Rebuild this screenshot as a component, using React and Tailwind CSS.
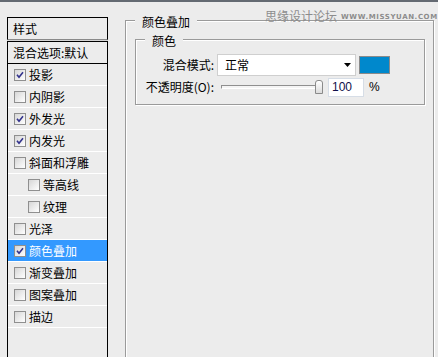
import React from 'react';

const items = [
    { label: '投影', checked: true },
    { label: '内阴影' },
    { label: '外发光', checked: true },
    { label: '内发光', checked: true },
    { label: '斜面和浮雕' },
    { label: '等高线', sub: true },
    { label: '纹理', sub: true },
    { label: '光泽' },
    { label: '颜色叠加', checked: true, active: true },
    { label: '渐变叠加' },
    { label: '图案叠加' },
    { label: '描边' },
];

function Checkbox({ checked }) {
    return (
        <span className="w-[12px] h-[12px] shrink-0 border border-[#8f8f8f] bg-linear-to-br from-[#d6d6d6] to-white flex items-center justify-center">
            {checked && (
                <svg width="8" height="8" viewBox="0 0 8 8">
                    <path d="M1 3.8 L3 6.2 L7 1.2" fill="none" stroke="#32328c" strokeWidth="1.6" />
                </svg>
            )}
        </span>
    );
}

export default function App() {
    return (
        <div className="relative w-[438px] h-[357px] bg-[#ececec] overflow-hidden flex flex-col font-['Noto_Sans_CJK_SC',sans-serif] text-[12px] leading-[14px] text-black">
            <div className="h-[2px] bg-[#646a72] shrink-0" />

            <div className="flex flex-1 min-h-0">
                {/* style list */}
                <aside className="ml-[7px] mt-[15px] w-[101px] flex flex-col shrink-0">
                    <div className="h-[23px] border-x border-t border-black border-b border-b-[#8a8a8a] flex items-center pl-[5px]">
                        样式
                    </div>
                    <div className="h-[1px] bg-[#d4d4d4]" />
                    <div className="flex-1 border-x border-t border-black">
                        <div className="h-[22px] border-b border-black flex items-center pl-[5px]">
                            混合选项:默认
                        </div>
                        {items.map((item) => (
                            <div
                                key={item.label}
                                className={`h-[22px] border-b border-white flex items-center gap-[3px] ${item.sub ? 'pl-[20px]' : 'pl-[6px]'} ${item.active ? 'bg-[#3399ff] text-white' : ''}`}
                            >
                                <Checkbox checked={item.checked} />
                                <span>{item.label}</span>
                            </div>
                        ))}
                    </div>
                </aside>

                {/* color overlay panel */}
                <fieldset className="ml-[17px] mt-[10px] w-[309px] h-[400px] shrink-0 border border-[#9a9a9a] shadow-[inset_1px_1px_0_#fff,1px_1px_0_#fff] pl-[9px]">
                    <legend className="px-[7px] pt-[2px] leading-[15px] bg-[#ececec]">颜色叠加</legend>
                    <fieldset className="mt-[2px] w-[290px] border border-[#9a9a9a] shadow-[inset_1px_1px_0_#fff,1px_1px_0_#fff] pl-[9px] pb-[7px]">
                        <legend className="px-[7px] pt-[2px] leading-[15px] bg-[#ececec]">颜色</legend>
                        <div className="mt-[6px] flex items-center">
                            <span className="w-[69px] text-right">混合模式:</span>
                            <div className="ml-[3px] w-[139px] h-[22px] bg-white border border-[#cfcfcf] flex items-center justify-between pl-[7px] pr-[4px]">
                                <span>正常</span>
                                <svg width="7" height="4" viewBox="0 0 7 4">
                                    <path d="M0 0 H7 L3.5 4 Z" fill="#000" />
                                </svg>
                            </div>
                            <span className="ml-[3px] w-[31px] h-[18px] bg-[#0088cc] border border-[#8a8a8a]" />
                        </div>
                        <div className="mt-[1px] h-[20px] flex items-center">
                            <span className="w-[69px] text-right">不透明度(O):</span>
                            <div className="relative ml-[7px] w-[102px] h-[16px] flex items-center">
                                <div className="w-[96px] h-[4px] border-t border-l border-[#8f8f8f] border-b border-r border-b-white border-r-white bg-[#f4f4f4]" />
                                <span className="absolute left-[94px] top-[1px] w-[8px] h-[14px] rounded-t-[3px] border border-[#8a8a8a] bg-linear-to-b from-white to-[#dcdcdc]" />
                            </div>
                            <div className="ml-[5px] w-[36px] h-[19px] bg-white border border-[#d6dde6] flex items-center pl-[3px] font-['Liberation_Sans',sans-serif] text-[12px] text-[#10104a]">
                                100
                            </div>
                            <span className="ml-[5px] font-['Liberation_Sans',sans-serif]">%</span>
                        </div>
                    </fieldset>
                </fieldset>
            </div>

            {/* watermark */}
            <div className="absolute left-[265px] top-[9px] flex items-end gap-[4px] text-[#8c8c8c]">
                <span className="text-[12px] leading-[13px]">思缘设计论坛</span>
                <span className="font-['DejaVu_Sans',sans-serif] font-bold text-[7px] leading-[9px] tracking-[0.6px]">WWW.MISSYUAN.COM</span>
            </div>
        </div>
    );
}
